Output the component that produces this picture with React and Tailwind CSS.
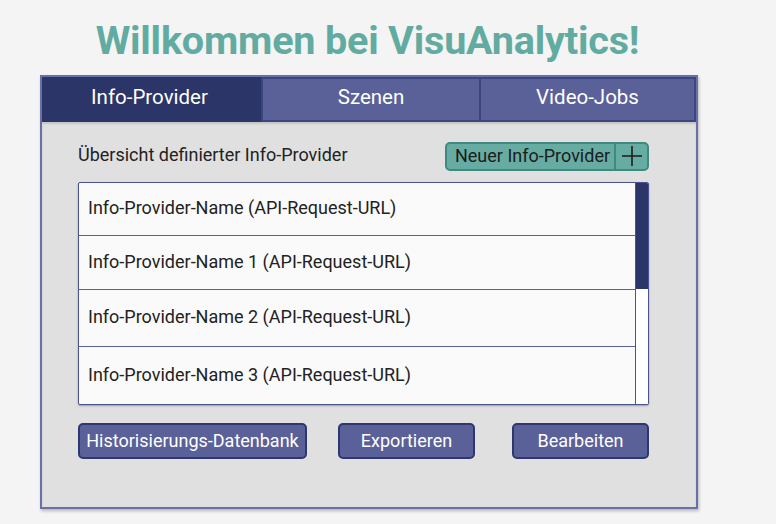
import React from "react";

const rows = [
  { t: "Info-Provider-Name (API-Request-URL)", h: "h-[53px]" },
  { t: "Info-Provider-Name 1 (API-Request-URL)", h: "h-[54px]" },
  { t: "Info-Provider-Name 2 (API-Request-URL)", h: "h-[58px]" },
  { t: "Info-Provider-Name 3 (API-Request-URL)", h: "h-[57px]" },
];

export default function App() {
  return (
    <div
      className="w-[776px] h-[524px] bg-[#f4f4f4] overflow-hidden"
      style={{ fontFamily: "Roboto, 'Liberation Sans', sans-serif" }}
    >
      <div className="w-[658px] ml-[40px]">
        <h1 className="h-[75px] flex items-center justify-center pt-[7px] pr-[3px] text-[39.6px] font-bold text-[#62aba0] tracking-[-0.2px]">
          Willkommen bei VisuAnalytics!
        </h1>
        <div className="h-[434px] border-2 border-[#6870a8] bg-[#e0e0e0] shadow-[1px_2px_3px_rgba(0,0,0,0.25)] flex flex-col">
          <div className="flex h-[45px] shrink-0 bg-[#2b3568]">
            <div className="w-[219px] flex items-center justify-center pb-[5px] pr-[4px] text-white text-[20.5px] bg-[#2b3568]">
              Info-Provider
            </div>
            <div className="w-[220px] flex items-center justify-center pb-[5px] text-white text-[20.5px] bg-[#5a6199] border-2 border-[#3b4580]">
              Szenen
            </div>
            <div className="flex-1 flex items-center justify-center pb-[5px] text-white text-[20.5px] bg-[#5a6199] border-2 border-l-0 border-[#3b4580]">
              Video-Jobs
            </div>
          </div>
          <div className="pl-[36px] pr-[47px] pt-[19px] shadow-[inset_0_2px_2px_rgba(0,0,0,0.12)] flex-1">
            <div className="flex items-center justify-between h-[30px]">
              <span className="text-[18px] text-[#222] pb-[3px]">Übersicht definierter Info-Provider</span>
              <div className="flex h-[29px] w-[204px] rounded-[5px] bg-[#66aca2] border-2 border-[#3e8a7e] text-[#1c1c1c] text-[18px]">
                <div className="flex-1 flex items-center justify-center pb-[2px] pl-[4px]">Neuer Info-Provider</div>
                <div className="w-[33px] border-l-2 border-[#3e8a7e] flex items-center justify-center">
                  <svg width="22" height="22" viewBox="0 0 22 22">
                    <path d="M11 1v20M1 11h20" stroke="#1c1c1c" strokeWidth="1.6" />
                  </svg>
                </div>
              </div>
            </div>
            <div className="mt-[11px] flex border border-[#4a5290] rounded-[2px] bg-[#fafafa] shadow-[0_1px_2px_rgba(0,0,0,0.3)] h-[223px] overflow-hidden">
              <div className="flex-1 flex flex-col">
                {rows.map((r, i) => (
                  <div
                    key={i}
                    className={`${r.h} flex items-center pl-[9px] pb-[2px] text-[18px] text-[#222] ${i < 3 ? "border-b border-[#5a6199]" : ""}`}
                  >
                    {r.t}
                  </div>
                ))}
              </div>
              <div className="w-[13px] border-l border-[#4a5290] bg-white flex flex-col">
                <div className="h-[106px] bg-[#2b3568]" />
              </div>
            </div>
            <div className="mt-[18px] flex h-[36px] text-[18px] text-white">
              <button className="w-[229px] rounded-[5px] bg-[#5a6199] border-2 border-[#2e3870] flex items-center justify-center pb-[2px]">
                Historisierungs-Datenbank
              </button>
              <button className="ml-[31px] w-[137px] rounded-[5px] bg-[#5a6199] border-2 border-[#2e3870] flex items-center justify-center pb-[2px]">
                Exportieren
              </button>
              <button className="ml-[37px] w-[137px] rounded-[5px] bg-[#5a6199] border-2 border-[#2e3870] flex items-center justify-center pb-[2px]">
                Bearbeiten
              </button>
            </div>
          </div>
        </div>
      </div>
    </div>
  );
}
